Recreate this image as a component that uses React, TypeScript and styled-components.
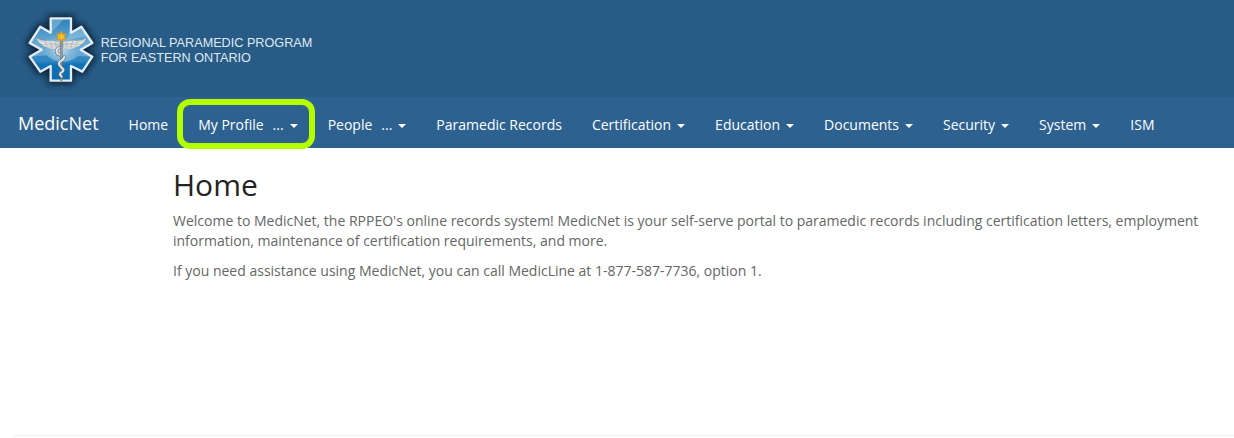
import React from "react";
import styled, { createGlobalStyle } from "styled-components";

const GlobalStyle = createGlobalStyle`
  *, *::before, *::after { box-sizing: border-box; }
  body {
    margin: 0;
    background: #fff;
    color: #666;
    font: 14px/20px "Open Sans", "Liberation Sans", sans-serif;
  }
`;

const Banner = styled.header`
  display: flex;
  align-items: flex-start;
  height: 97px;
  padding-left: 10px;
  background: #285c86;
`;

const Logo = styled.svg`
  flex: none;
  width: 310px;
  height: 97px;
`;

const LogoText = styled.text`
  fill: #dfe8f1;
  font-family: "Liberation Sans", Arial, sans-serif;
  font-size: 38px;
`;

const Navbar = styled.nav`
  display: flex;
  align-items: stretch;
  min-height: 51px;
  padding-left: 3px;
  background: #2d618f;
`;

const Brand = styled.a`
  padding: 16px 15px 15px;
  color: #fff;
  font-size: 18px;
  text-decoration: none;
`;

const Menu = styled.ul`
  display: flex;
  margin: 0;
  padding: 0;
  list-style: none;
`;

const MenuItem = styled.li<{ $highlighted?: boolean }>`
  position: relative;
  ${({ $highlighted }) =>
    $highlighted &&
    `&::after {
      content: "";
      position: absolute;
      inset: 2px -2px -1px -6px;
      border: 6px solid #b3ff00;
      border-radius: 13px;
      pointer-events: none;
    }`}
`;

const MenuLink = styled.a`
  display: flex;
  align-items: center;
  padding: 18px 15px 13px;
  color: #fff;
  text-decoration: none;
  white-space: nowrap;
`;

const Ellipsis = styled.span`
  margin-left: 9px;
`;

const Caret = styled.span`
  margin: 2px 0 0 6px;
  border-top: 4px solid #fff;
  border-right: 4px solid transparent;
  border-left: 4px solid transparent;
`;

const Content = styled.main`
  min-height: 287px;
  padding: 20px 15px 20px 173px;
`;

const Title = styled.h1`
  margin: 0 0 10px;
  color: #222;
  font-size: 30px;
  font-weight: 400;
  line-height: 33px;
`;

const Paragraph = styled.p`
  margin: 0 0 10px;
`;

const Divider = styled.hr`
  margin: 0 0 0 13px;
  border: 0;
  border-top: 1px solid #eee;
`;

type Entry = { label: string; dots?: boolean; menu?: boolean; highlighted?: boolean };

const entries: Entry[] = [
  { label: "Home" },
  { label: "My Profile", dots: true, menu: true, highlighted: true },
  { label: "People", dots: true, menu: true },
  { label: "Paramedic Records" },
  { label: "Certification", menu: true },
  { label: "Education", menu: true },
  { label: "Documents", menu: true },
  { label: "Security", menu: true },
  { label: "System", menu: true },
  { label: "ISM" },
];

const star =
  "M122 55H183V98L214 80L247 129L212 149L247 170L217 215L183 198V242H122V198L91 215L59 170L95 149L59 129L91 80L122 98Z";

const snake =
  "M147 143C137 148 137 162 149 164M163 171C161 184 145 181 147 193C149 202 162 203 160 211C159 218 148 217 150 224L155 230";

function ProgramLogo() {
  return (
    <Logo viewBox="0 0 930 291" role="img" aria-label="Regional Paramedic Program for Eastern Ontario">
      <defs>
        <linearGradient id="blue" x1="0" y1="0" x2="0" y2="1">
          <stop offset="0" stopColor="#2a82bd" />
          <stop offset="0.4" stopColor="#69a9d3" />
          <stop offset="0.68" stopColor="#63a6d2" />
          <stop offset="0.74" stopColor="#1678b8" />
          <stop offset="1" stopColor="#126aab" />
        </linearGradient>
        <radialGradient id="shine">
          <stop offset="0" stopColor="#d6eaf5" stopOpacity="0.9" />
          <stop offset="1" stopColor="#8fc0df" stopOpacity="0" />
        </radialGradient>
        <filter id="glow" x="-30%" y="-30%" width="160%" height="160%">
          <feGaussianBlur stdDeviation="9" />
        </filter>
        <clipPath id="inside">
          <path d={star} />
        </clipPath>
      </defs>
      <path d={star} fill="#0b2339" stroke="#0b2339" strokeWidth="20" filter="url(#glow)" />
      <path d={star} fill="url(#blue)" />
      <g clipPath="url(#inside)">
        <path d="M122 55H164L122 100ZM183 62V98L214 80L232 108L172 120Z" fill="#b5d7eb" opacity="0.38" />
        <ellipse cx="153" cy="148" rx="58" ry="50" fill="url(#shine)" />
        <path
          d="M59 170L110 166Q153 205 206 168L247 170L217 215L183 198V242H122V198L91 215Z"
          fill="#0b70b4"
          opacity="0.55"
        />
      </g>
      <path d={star} fill="none" stroke="#e2eef6" strokeWidth="7" strokeLinejoin="round" />
      <g fill="#e6e6e4" stroke="#76838c" strokeWidth="1">
        <path d="M151 126Q124 121 108 122Q92 122 78 113Q83 127 94 133Q98 140 108 141Q117 148 128 147Q140 151 149 140Z" />
        <path d="M157 126Q184 121 200 122Q216 122 230 113Q225 127 214 133Q210 140 200 141Q191 148 180 147Q168 151 159 140Z" />
        <path
          d="M84 119Q112 134 150 130M94 133Q124 137 149 133M109 141Q134 143 149 136M224 119Q196 134 158 130M214 133Q184 137 159 133M199 141Q174 143 159 136M104 124L111 139M120 123L126 144M136 125L139 145M204 124L197 139M188 123L182 144M172 125L169 145"
          fill="none"
        />
      </g>
      <path d="M152 119H157L156 242H152Z" fill="#b4b3ae" stroke="#5d6266" strokeWidth="2" />
      <path d={snake} fill="none" stroke="#586874" strokeWidth="9" strokeLinecap="round" />
      <path d={snake} fill="none" stroke="#e5e6e3" strokeWidth="6" strokeLinecap="round" />
      <path
        d="M154 94L158 103L167 101L163 110L167 119L158 117L154 126L150 117L140 119L145 110L140 101L150 103Z"
        fill="#f6be2c"
        stroke="#d49617"
        strokeWidth="3"
        strokeLinejoin="round"
      />
      <LogoText x="272" y="141">
        REGIONAL PARAMEDIC PROGRAM
      </LogoText>
      <LogoText x="272" y="186">
        FOR EASTERN ONTARIO
      </LogoText>
    </Logo>
  );
}

export default function App() {
  return (
    <>
      <GlobalStyle />
      <Banner>
        <ProgramLogo />
      </Banner>
      <Navbar aria-label="Main">
        <Brand href="#">MedicNet</Brand>
        <Menu>
          {entries.map(({ label, dots, menu, highlighted }) => (
            <MenuItem key={label} $highlighted={highlighted}>
              <MenuLink href="#" aria-haspopup={menu ? "menu" : undefined}>
                {label}
                {dots && <Ellipsis>...</Ellipsis>}
                {menu && <Caret />}
              </MenuLink>
            </MenuItem>
          ))}
        </Menu>
      </Navbar>
      <Content>
        <Title>Home</Title>
        <Paragraph>
          Welcome to MedicNet, the RPPEO's online records system! MedicNet is your self-serve portal to paramedic
          records including certification letters, employment information, maintenance of certification requirements,
          and more.
        </Paragraph>
        <Paragraph>
          If you need assistance using MedicNet, you can call MedicLine at 1-877-587-7736, option 1.
        </Paragraph>
      </Content>
      <Divider />
    </>
  );
}
